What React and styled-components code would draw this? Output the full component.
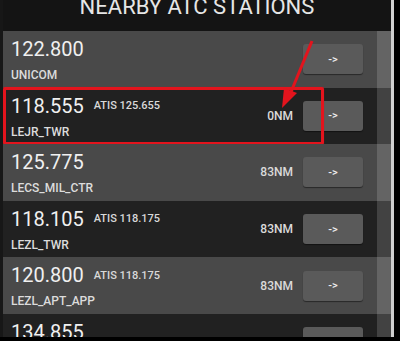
import React from 'react'
import styled, { createGlobalStyle, css } from 'styled-components'

const GlobalStyle = createGlobalStyle`
  html, body {
    margin: 0;
    padding: 0;
    background: #000;
  }
  body {
    font-family: Roboto, 'Liberation Sans', sans-serif;
  }
`

const stations = [
  { freq: '122.800', name: 'UNICOM' },
  { freq: '118.555', atis: 'ATIS 125.655', name: 'LEJR_TWR', dist: '0NM', marked: true },
  { freq: '125.775', name: 'LECS_MIL_CTR', dist: '83NM' },
  { freq: '118.105', atis: 'ATIS 118.175', name: 'LEZL_TWR', dist: '83NM' },
  { freq: '120.800', atis: 'ATIS 118.175', name: 'LEZL_APT_APP', dist: '83NM' },
  { freq: '134.855', dist: '83NM' },
]

const Frame = styled.div`
  position: relative;
  display: flex;
  width: 400px;
  height: 341px;
  background: #000;
  overflow: hidden;
`

const Screen = styled.div`
  display: flex;
  flex-direction: column;
  width: 391px;
  height: 337px;
  box-sizing: border-box;
  border-left: 3px solid #171717;
  background: #141414;
  overflow: hidden;
`

const EdgeLine = styled.div`
  width: 3px;
  height: 337px;
  background: #cfcfcf;
`

const Header = styled.div`
  display: flex;
  justify-content: center;
  align-items: flex-start;
  flex: 0 0 31px;
  background: #141414;
  overflow: hidden;
`

const Title = styled.h1`
  margin: -4px 0 0;
  font-size: 22px;
  line-height: 22px;
  font-weight: 400;
  color: #e6e6e6;
  letter-spacing: 0;
`

const List = styled.div`
  position: relative;
  flex: 1;
  overflow: hidden;
`

const ScrollTrack = styled.div`
  position: absolute;
  top: 0;
  right: 0;
  bottom: 0;
  width: 14px;
  background: rgba(255, 255, 255, 0.15);
`

const Row = styled.div`
  position: relative;
  display: flex;
  height: 56.6px;
  flex-shrink: 0;
  padding: 0 28px 0 8px;
  box-sizing: border-box;
  background: ${(p) => (p.dark ? '#212121' : '#494949')};
`

const Info = styled.div`
  display: flex;
  flex-direction: column;
  flex: 1;
  padding-top: 6px;
`

const FreqLine = styled.div`
  display: flex;
  align-items: center;
  gap: 10px;
`

const Freq = styled.span`
  font-size: 20px;
  color: #f0f0f0;
`

const Atis = styled.span`
  font-size: 11px;
  font-weight: 500;
  color: #d9d9d9;
`

const Name = styled.div`
  margin-top: 7px;
  font-size: 12px;
  font-weight: 500;
  color: #dcdcdc;
`

const Side = styled.div`
  display: flex;
  align-items: center;
  gap: 10px;
`

const Distance = styled.span`
  font-size: 12px;
  font-weight: 500;
  color: #dadada;
`

const GoButton = styled.button`
  width: 60px;
  height: 30px;
  padding: 0;
  border: none;
  border-radius: 3px;
  background: #5a5a5a;
  box-shadow: 0 1px 1px rgba(0, 0, 0, 0.45);
  color: #eeeeee;
  font-family: Roboto, 'Liberation Sans', sans-serif;
  font-size: 11px;
  font-weight: 500;
`

const Marker = styled.div`
  position: absolute;
  left: 0;
  top: -1px;
  width: 321px;
  height: 58px;
  box-sizing: border-box;
  border: 3px solid #e3141d;
  border-radius: 2px;
  ${(p) =>
    p.glow &&
    css`
      box-shadow: 0 0 1px rgba(227, 20, 29, 0.6);
    `}
`

const Annotation = styled.svg`
  position: absolute;
  left: 0;
  top: 0;
  pointer-events: none;
`

const StationRow = ({ station, dark }) => (
  <Row dark={dark}>
    <Info>
      <FreqLine>
        <Freq>{station.freq}</Freq>
        {station.atis && <Atis>{station.atis}</Atis>}
      </FreqLine>
      {station.name && <Name>{station.name}</Name>}
    </Info>
    <Side>
      {station.dist && <Distance>{station.dist}</Distance>}
      <GoButton type="button">-&gt;</GoButton>
    </Side>
    {station.marked && <Marker glow />}
  </Row>
)

const App = () => (
  <>
    <GlobalStyle />
    <Frame>
      <Screen>
        <Header>
          <Title>NEARBY ATC STATIONS</Title>
        </Header>
        <List>
          {stations.map((s, i) => (
            <StationRow key={s.freq + i} station={s} dark={i % 2 === 1} />
          ))}
          <ScrollTrack />
        </List>
      </Screen>
      <EdgeLine />
      <Annotation width="400" height="341" viewBox="0 0 400 341">
        <line x1="312" y1="41" x2="291" y2="92" stroke="#e3141d" strokeWidth="3" />
        <polygon points="284,88 297,93 282,108" fill="#e3141d" />
      </Annotation>
    </Frame>
  </>
)

export default App
